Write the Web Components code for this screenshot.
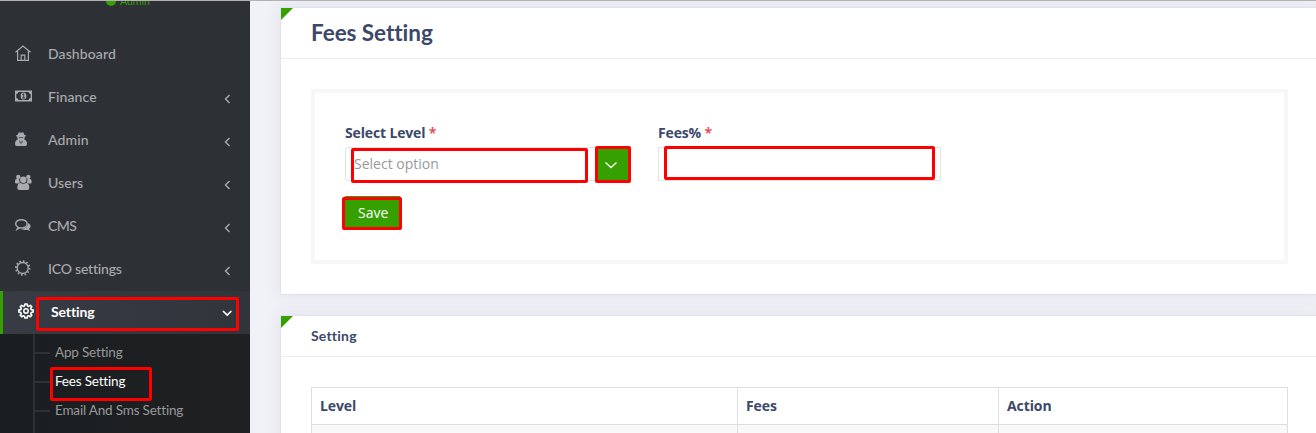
<!DOCTYPE html>
<html lang="en">
<head>
<meta charset="utf-8">
<title>Fees Setting</title>
<style>
html,body{margin:0;height:100%;overflow:hidden}
body{font-family:"Open Sans","Noto Sans",sans-serif;font-size:14px;color:#3b486a;font-variant-ligatures:none}
</style>
</head>
<body>
<admin-app></admin-app>
<script>
const define = (name, html, setup) => customElements.define(name, class extends HTMLElement {
  constructor() {
    super();
    const t = document.createElement('template');
    t.innerHTML = '<style>*{box-sizing:border-box}:host{box-sizing:border-box}</style>' + html;
    this.attachShadow({mode: 'open'}).appendChild(t.content.cloneNode(true));
  }
  connectedCallback() { if (setup) setup(this, this.shadowRoot); }
});

const icons = {
  home: '<g fill="none" stroke="currentColor" stroke-width="1.200"><path d="M.5 7.200 8 1l7.500 6.200M2.600 6v9.300h10.800V6M6.200 15v-4.900h3.600V15"/></g>',
  money: '<path fill="currentColor" fill-rule="evenodd" d="M0 2.500h17v11H0zM3.500 4A2.500 2.500 0 0 1 1.300 6v4a2.500 2.500 0 0 1 2.200 2h10a2.500 2.500 0 0 1 2.200-2V6a2.500 2.500 0 0 1-2.200-2z"/><ellipse cx="8.500" cy="8" rx="2.900" ry="3.500" fill="currentColor"/><path d="M7.400 6.500 8.700 5.700v4.100M7.300 10h2.700" stroke="#2d3136" fill="none"/>',
  secret: '<path fill="currentColor" fill-rule="evenodd" d="M2.800 3.800 3.700 1.300Q6 2 8.300 1.300l.9 2.500q1.900.4 1.900.9 0 .5-1.300.8.200 1.700-.7 2.900Q12 9.100 12 12.900q0 2.100-1.500 2.100h-9Q0 15 0 12.900 0 9.100 2.900 8.400 2 7.200 2.200 5.500.9 5.200.9 4.700q0-.5 1.900-.9zM3.600 6.200l.7 1 1.300-.2.400-.6.400.6 1.300.2.700-1zM4.200 9.600l1.100 4L5.600 10.500zm3.600 0-1.400.9.300 3.100z"/>',
  users: '<g fill="currentColor"><circle cx="3.300" cy="2.900" r="2.200"/><circle cx="13.300" cy="2.900" r="2.200"/><path d="M0 8.500V6.900Q0 5 1.700 5h2.300q.3 2.500.9 3.300L3.800 9.600H1.200Q0 9.600 0 8.500zM16.600 8.500V6.900q0-1.900-1.700-1.900h-2.300q-.3 2.500-.9 3.300l1.100 1.300h2.600q1.200 0 1.200-1.100z"/><circle cx="8.300" cy="5.700" r="3.200"/><path d="M2.300 13.800q0-4.900 3.200-4.900 2.800 1.600 5.600 0 3.200 0 3.200 4.900 0 2.200-2 2.200h-8q-2 0-2-2.200z"/></g>',
  chat: '<path d="M6.400 2.700C3 2.700.7 4.500.7 6.900c0 1.500.9 2.600 2.300 3.300l-1 2.100 2.700-1.500c4.400.6 7.500-1.200 7.500-3.900 0-2.400-2.400-4.200-5.800-4.200z" fill="none" stroke="currentColor" stroke-width="1.400"/><path d="M13.100 6c1.600.8 2.500 1.900 2.500 3.200 0 1.200-.7 2-1.600 2.600l1.200 2.300-3.400-1.400c-2.300.5-4.800.1-6.200-.9 4.600.1 7.900-2.300 7.500-5.800z" fill="currentColor"/>',
  sun: '<circle cx="7.700" cy="8" r="5.500" fill="none" stroke="currentColor" stroke-width="1.300"/><circle cx="7.700" cy="8" r="6.800" fill="none" stroke="currentColor" stroke-width="1.800" stroke-dasharray="1.600 1.961"/>',
  gear: '<g fill="none" stroke="currentColor"><circle cx="8" cy="8" r="2.200" stroke-width="1.500"/><path stroke-width="1.600" stroke-linejoin="round" d="M6.900 1h2.200l.4 1.900 1.200.5 1.600-1.100 1.500 1.500-1.100 1.600.5 1.200 1.900.3v2.200l-1.900.4-.5 1.200 1.100 1.600-1.500 1.500-1.600-1.100-1.200.5-.4 1.800H6.900l-.4-1.800-1.200-.5-1.600 1.100-1.500-1.500 1.100-1.600-.5-1.200-1.900-.4V6.900l1.900-.3.500-1.200-1.100-1.600 1.500-1.500 1.600 1.100 1.200-.5z"/></g>',
  left: '<path d="m10.500 4-4 4 4 4" fill="none" stroke="currentColor" stroke-width="1.400"/>',
  down: '<path d="m4 6 4.200 4 4.200-4" fill="none" stroke="currentColor" stroke-width="1.700"/>',
  select: '<path d="m2.500 5.500 5.500 5 5.500-5" fill="none" stroke="currentColor" stroke-width="1.400"/>'
};
define('ui-icon', '<style>:host{display:block;width:17px;height:16px;flex:none}svg{display:block;overflow:visible}</style><svg width="16" height="16" viewBox="0 0 16 16"></svg>',
  (el, r) => r.querySelector('svg').innerHTML = icons[el.getAttribute('name')] || '');

define('mark-box', '<style>:host{display:block;position:absolute;border:3px solid #fe0000;border-radius:2px;pointer-events:none;z-index:3}</style>');

define('nav-item', `<style>
:host{display:flex;position:relative;align-items:center;height:43px;padding:0 15px 2px;color:#a9abad;font:500 14px Lato,sans-serif}
:host([active]){background:linear-gradient(90deg,#373b44,#30343b);color:#fff;font-weight:700;border-left:3px solid #36a000}
.label{flex:1;margin-left:16px;letter-spacing:var(--ls,.1px);white-space:nowrap}
.i{position:relative;top:-1px}
.a{width:16px;position:relative;top:2px}
:host([active]) .a{top:1px}
</style><ui-icon class="i"></ui-icon><span class="label"><slot></slot></span><ui-icon class="a"></ui-icon><slot name="mark"></slot>`,
  (el, r) => {
    const i = r.querySelector('.i'), a = r.querySelector('.a');
    const arrow = el.hasAttribute('active') ? 'down' : 'left';
    i.setAttribute('name', el.getAttribute('icon'));
    i.shadowRoot.querySelector('svg').innerHTML = icons[el.getAttribute('icon')];
    if (el.hasAttribute('leaf')) { a.remove(); return; }
    a.setAttribute('name', arrow);
    a.shadowRoot.querySelector('svg').innerHTML = icons[arrow];
  });

define('sub-item', `<style>
:host{display:flex;position:relative;align-items:center;height:29px;color:#97999b;font:400 13.500px Lato,sans-serif}
:host([active]){color:#fff}
i{width:15px;height:2px;background:#2d3136;margin-right:5px}
span{letter-spacing:var(--ls,-.18px);white-space:nowrap;padding-bottom:2px}
</style><i></i><span><slot></slot></span><slot name="mark"></slot>`);

define('side-bar', `<style>
:host{display:block;width:250px;height:433px;background:#2d3136;flex:none;overflow:hidden}
.role{height:33px;display:flex;align-items:flex-start;padding-left:106px;color:#36a000;font:10.500px/12px Lato,sans-serif}
.role i{width:10px;height:10px;border-radius:50%;background:#36a000;margin:-4px 4px 0 0}
.role span{margin-top:-5px}
.sub{background:linear-gradient(90deg,#1b1e20,#1e2022);height:120px;padding:0 0 0 33px}
.tree{border-left:2px solid #2d3136;padding-top:4px;height:120px}
</style>
<div class="role"><i></i><span>Admin</span></div>
<nav>
<nav-item icon="home" leaf>Dashboard</nav-item>
<nav-item icon="money">Finance</nav-item>
<nav-item icon="secret">Admin</nav-item>
<nav-item icon="users">Users</nav-item>
<nav-item icon="chat" style="--ls:-.6px">CMS</nav-item>
<nav-item icon="sun" style="--ls:-.2px">ICO settings</nav-item>
<nav-item icon="gear" active style="--ls:-.1px">Setting<mark-box slot="mark" style="left:33px;top:6px;width:203px;height:34px"></mark-box></nav-item>
</nav>
<div class="sub"><div class="tree">
<sub-item>App Setting</sub-item>
<sub-item active>Fees Setting<mark-box slot="mark" style="left:15px;top:0;width:102px;height:34px"></mark-box></sub-item>
<sub-item>Email And Sms Setting</sub-item>
</div></div>`);

define('ui-panel', `<style>
:host{display:block;background:#fff;border:1px solid #e0e3ef;box-shadow:0 0 15px 1px rgba(69,65,120,.08)}
header{display:flex;align-items:center;position:relative;height:var(--head,41px);border-bottom:1px solid #ebedf2;padding:0 0 2px 30px;font:700 var(--size,14px) Lato,sans-serif;letter-spacing:var(--ls,.2px)}
header:before{content:"";position:absolute;left:0;top:0;width:12px;height:12px;background:#36a000;clip-path:polygon(0 0,100% 0,0 100%)}
.body{padding:30px 30px 0}
</style><header><slot name="title"></slot></header><div class="body"><slot></slot></div>`);

define('form-field', `<style>
:host{display:block;position:relative}
label{display:block;font-weight:700;line-height:18px;height:23px;letter-spacing:-.15px}
b{color:#ee3b48;font-weight:600}
.box{display:flex;height:34px;border:1px solid #e3e4e6;border-radius:var(--r,0);color:#999}
</style><label><slot name="label"></slot> <b>*</b></label><div class="box"><slot></slot></div><slot name="mark"></slot>`);

define('drop-select', `<style>
:host{display:flex;flex:1;align-items:center;justify-content:space-between;padding-left:8px;font-size:14px}
.t{padding-bottom:2px}
.b{width:34px;align-self:stretch;background:#36a000;color:#fff;display:flex;align-items:center;padding:1px 0 0 7px}
</style><span class="t"><slot></slot></span><div class="b"><ui-icon name="select" style="width:16px"></ui-icon></div>`);

define('save-button', `<style>
:host{display:flex;position:relative;width:57px;height:34px;background:#36a000;color:#fff;font-size:14px;align-items:center;padding:0 0 2px 14px;border-radius:2px}
</style><slot></slot><slot name="mark"></slot>`);

define('fee-form', `<style>
:host{display:block;height:175px;border:4px solid #f6f7f9;padding:31px 30px 0}
.row{display:grid;grid-template-columns:286px 283px;column-gap:27px}
</style><div class="row">
<form-field style="--r:3px"><span slot="label">Select Level</span><drop-select>Select option</drop-select>
<mark-box slot="mark" style="left:6px;top:24px;width:237px;height:35px"></mark-box>
<mark-box slot="mark" style="left:250px;top:22px;width:36px;height:37px"></mark-box></form-field>
<form-field><span slot="label">Fees%</span>
<mark-box slot="mark" style="left:6px;top:22px;width:271px;height:34px"></mark-box></form-field>
</div>
<save-button style="margin:15px 0 0 -1px">Save<mark-box slot="mark" style="left:-2px;top:1px;width:60px;height:33px"></mark-box></save-button>`);

define('fee-table', `<style>
:host{display:grid;grid-template-columns:426px 261px 1fr;border:1px solid #dedede;height:80px;grid-template-rows:37px 42px;font-weight:700;letter-spacing:-.1px}
div{border-right:1px solid #dedede;border-bottom:1px solid #dedede;padding:9px 8px;line-height:18px}
div:nth-of-type(3n){border-right:0}
.r{background:#f9f9f9}
</style><div>Level</div><div>Fees</div><div>Action</div><div class="r"></div><div class="r"></div><div class="r"></div>`);

define('admin-app', `<style>
:host{display:flex;position:relative;height:433px;overflow:hidden;background:#f1f2f7}
main{flex:1;padding:7px 0 0 30px;min-width:0}
ui-panel{width:1039px}
ui-panel+ui-panel{margin-top:20px}
.line{position:absolute;left:0;right:0;top:0;height:1px;background:#b4b0b6;z-index:5}
</style><side-bar></side-bar><main>
<ui-panel style="--head:51px;--size:22.500px;--ls:-.05px;height:288px"><span slot="title">Fees Setting</span><fee-form></fee-form></ui-panel>
<ui-panel style="height:200px"><span slot="title">Setting</span><fee-table></fee-table></ui-panel>
</main><div class="line"></div>`);
</script>
</body>
</html>
